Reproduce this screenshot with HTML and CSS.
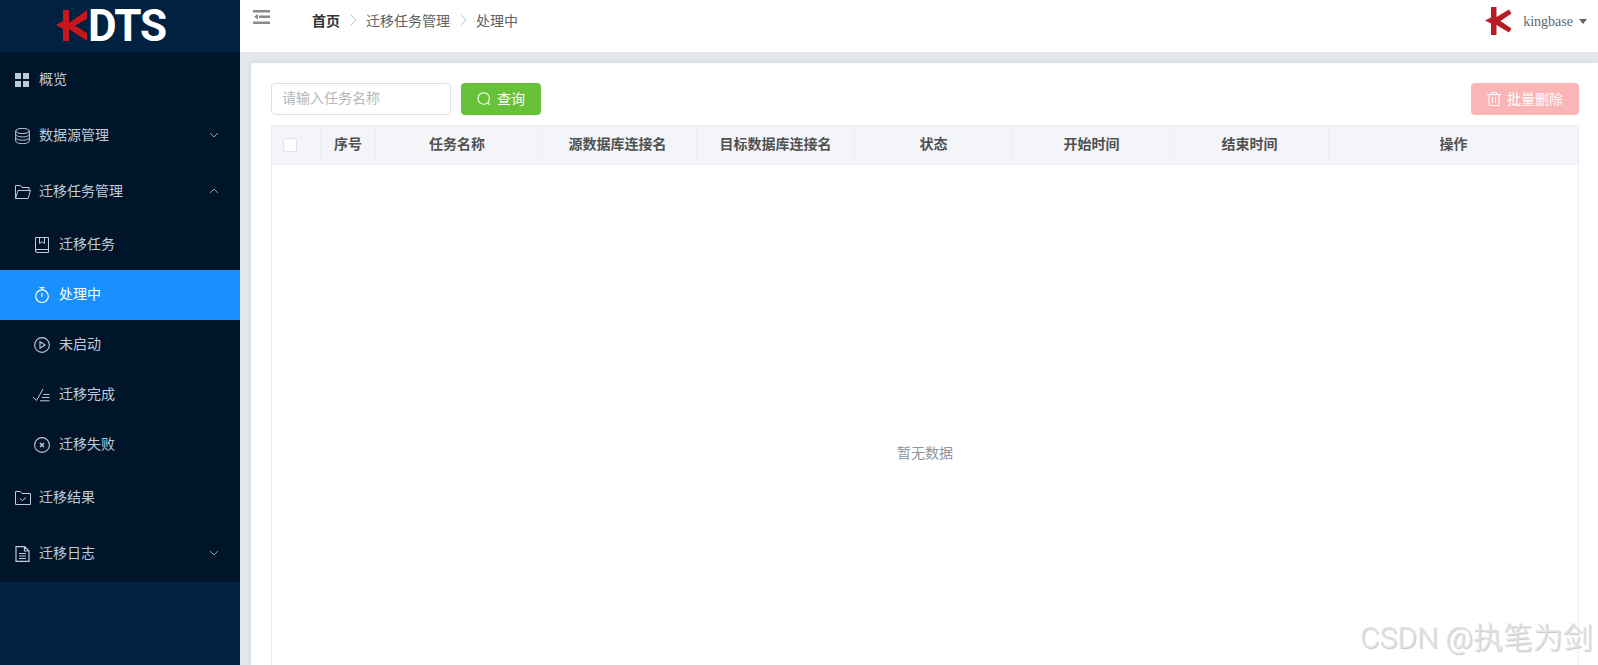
FILE: index.html
```html
<!DOCTYPE html>
<html lang="zh-CN">
<head>
<meta charset="utf-8">
<title>KDTS</title>
<link rel="stylesheet" href="styles.css">
</head>
<body>
<div class="app">
  <aside class="sidebar">
    <div class="logo">
      <svg class="logo-k" width="32" height="34" viewBox="0 0 32 34"><path fill="#c8161e" d="M7 1h6v13L31 1v9l-12 6.500L31 24v8L13 20v12H7V20L0 16l7-4z"/></svg>
      <span class="logo-text">DTS</span>
    </div>
    <nav class="menu">
      <a class="item"><svg class="ic" viewBox="0 0 16 16"><path fill="currentColor" d="M0 1h6v6H0zM8 1h6v6H8zM0 9h6v6H0zM8 9h6v6H8z"/></svg><span>概览</span></a>
      <a class="item"><svg class="ic" viewBox="0 0 16 16" fill="none" stroke="currentColor"><ellipse cx="7.500" cy="3" rx="6.800" ry="2.600"/><path d="M.7 3v10c0 1.500 3 2.600 6.800 2.600s6.800-1.100 6.800-2.600V3M.7 6.300c0 1.500 3 2.600 6.800 2.600s6.800-1.100 6.800-2.600M.7 9.600c0 1.500 3 2.600 6.800 2.600s6.800-1.100 6.800-2.600"/></svg><span>数据源管理</span><svg class="chev" viewBox="0 0 10 6"><path d="M1 1l4 4 4-4"/></svg></a>
      <a class="item"><svg class="ic" viewBox="0 0 16 16" fill="none" stroke="currentColor"><path d="M.5 14.500V1.500h5l1.500 2h7v3M.5 14.500h12.500l2.500-8H3z"/></svg><span>迁移任务管理</span><svg class="chev" viewBox="0 0 10 6"><path d="M1 5l4-4 4 4"/></svg></a>
      <a class="sub"><svg class="ic" viewBox="0 0 16 16" fill="none" stroke="currentColor"><path d="M1.500 13.500V.5h13v15H3a1.500 1.500 0 0 1-1.500-1.500 1.500 1.500 0 0 1 1.500-1.500h11.500M5.500.5v6l2.500-1.800 2.500 1.800v-6"/></svg><span>迁移任务</span></a>
      <a class="sub active"><svg class="ic" viewBox="0 0 16 16" fill="none" stroke="currentColor" stroke-width="1.200"><circle cx="8" cy="9.200" r="6.300"/><path d="M5.500.6h5M8 .6v2.400M8 6v3.800"/></svg><span>处理中</span></a>
      <a class="sub"><svg class="ic" viewBox="0 0 16 16" fill="none" stroke="currentColor" stroke-width="1.100"><circle cx="8" cy="8" r="7.400"/><path d="M6 4.800l5 3.200-5 3.200z"/></svg><span>未启动</span></a>
      <a class="sub"><svg class="ic wide" viewBox="0 0 17 14" fill="none" stroke="currentColor"><path d="M0 9l3.500 3.500L10 1M10.500 6.500h6M9 9.500h7.500M7 12.800h9.500"/></svg><span>迁移完成</span></a>
      <a class="sub"><svg class="ic" viewBox="0 0 16 16" fill="none" stroke="currentColor" stroke-width="1.100"><circle cx="8" cy="8" r="7.400"/><path stroke-width="1.500" d="M6 6l4 4M10 6l-4 4"/></svg><span>迁移失败</span></a>
      <a class="item"><svg class="ic" viewBox="0 0 16 16" fill="none" stroke="currentColor"><path d="M.5 14.500V1.500h5l1.500 2h8.500v11zM5 8.500l2.500 2 3.500-3"/></svg><span>迁移结果</span></a>
      <a class="item"><svg class="ic" viewBox="0 0 16 16" fill="none" stroke="currentColor" stroke-width="1.200"><path d="M1 .6h8.500L14 5v10.400H1zM9.500.6V5H14M4 7.500h7M4 10h7M4 12.500h7"/></svg><span>迁移日志</span><svg class="chev" viewBox="0 0 10 6"><path d="M1 1l4 4 4-4"/></svg></a>
    </nav>
  </aside>
  <div class="main">
    <header class="topbar">
      <svg class="fold" viewBox="0 0 17 14"><path fill="#8a8a8a" d="M0 0h17v2.500H0zM6 5.500h11V8H6zM0 11.500h17V14H0zM1 6.700l4-2.700v5.500z"/></svg>
      <div class="crumbs">
        <b>首页</b><svg class="sep" viewBox="0 0 8 12"><path d="M1 1l5 5-5 5"/></svg><span>迁移任务管理</span><svg class="sep" viewBox="0 0 8 12"><path d="M1 1l5 5-5 5"/></svg><span>处理中</span>
      </div>
      <div class="user">
        <svg class="user-logo" width="27" height="28" viewBox="0 0 27 28"><path fill="#b81c24" d="M6 0h5.500v10L24 2.500l2.500 4-11 7.500 11 7.500-2.500 4-12.500-7.500V28H6V16.500L0 13.500 6 10.500z"/></svg>
        <span class="uname">kingbase</span><i class="caret"></i>
      </div>
    </header>
    <section class="content">
      <div class="card">
        <div class="toolbar">
          <input class="search" type="text" placeholder="请输入任务名称">
          <button class="btn green"><svg class="bi" viewBox="0 0 14 14" fill="none" stroke="currentColor" stroke-width="1.100"><circle cx="6.700" cy="6.500" r="5.700"/><path d="M10.800 10.600l2.200 2.400"/></svg><span>查询</span></button>
          <button class="btn danger"><svg class="bi" viewBox="0 0 14 14" fill="none" stroke="currentColor"><path d="M0 2.500h14M2 2.500v11h10v-11M4.500 2.500V.5h5v2M5.500 5v6M8.500 5v6"/></svg><span>批量删除</span></button>
        </div>
        <div class="table">
          <div class="thead">
            <div class="th th-check"><i class="check"></i></div>
            <div class="th">序号</div>
            <div class="th">任务名称</div>
            <div class="th">源数据库连接名</div>
            <div class="th">目标数据库连接名</div>
            <div class="th">状态</div>
            <div class="th">开始时间</div>
            <div class="th">结束时间</div>
            <div class="th">操作</div>
          </div>
          <div class="tbody">暂无数据</div>
        </div>
      </div>
    </section>
  </div>
</div>
<div class="watermark">CSDN @执笔为剑</div>
</body>
</html>
```
FILE: styles.css
```css
* { box-sizing: border-box; }
html, body { margin: 0; height: 100%; overflow: hidden; }
body {
  font-family: "Liberation Sans", "Noto Sans CJK SC", sans-serif;
  font-size: 14px;
  color: #606266;
}
.app { display: flex; height: 665px; overflow: hidden; }

.sidebar { width: 240px; flex: none; background: #002140; }
.logo { height: 52px; display: flex; align-items: center; padding-left: 56px; }
.logo-k { flex: none; }
.logo-text {
  font-family: "Roboto", sans-serif;
  font-weight: 700;
  font-size: 44px;
  line-height: 52px;
  color: #fff;
  letter-spacing: -1px;
}
.menu { background: #001529; display: flex; flex-direction: column; }
.item, .sub {
  display: flex;
  align-items: center;
  color: #bfcbd9;
  font-size: 14px;
}
.item span, .sub span { margin-bottom: 4px; }
.item { height: 56px; padding-left: 15px; }
.sub { height: 50px; padding-left: 34px; }
.sub.active { background: #1890ff; color: #fff; }
.ic { width: 16px; height: 16px; flex: none; margin-right: 8px; }
.sub .ic { margin-right: 9px; }
.sub .ic.wide { width: 17px; height: 14px; margin-left: -1px; }
.chev {
  width: 10px;
  height: 6px;
  margin-left: auto;
  margin-right: 21px;
  margin-bottom: 2px;
  fill: none;
  stroke: #909db0;
}

.main { flex: 1; min-width: 0; display: flex; flex-direction: column; background: #e4e7ec; }
.topbar { height: 52px; flex: none; background: #fff; display: flex; align-items: flex-start; }
.fold { width: 17px; height: 14px; margin: 10px 0 0 13px; flex: none; }
.crumbs { display: flex; align-items: center; height: 20px; margin: 10px 0 0 42px; color: #606266; }
.crumbs b { color: #303133; font-weight: 700; }
.sep { width: 8px; height: 12px; margin: 0 8px 0 10px; fill: none; stroke: #c0c4cc; }
.user { margin-left: auto; display: flex; align-items: center; padding: 7px 11px 0 0; }
.uname { font-family: "Liberation Serif", serif; font-size: 14px; color: #606770; margin: 2px 0 0 11px; }
.caret {
  width: 0; height: 0;
  margin-left: 6px;
  border: 4px solid transparent;
  border-top: 5px solid #606266;
  border-bottom: 0;
}

.content { flex: 1; min-height: 0; padding: 11px 0 0 11px; }
.card {
  height: 100%;
  background: #fff;
  border-radius: 4px 0 0 0;
  padding: 20px 19px 0 20px;
  overflow: hidden;
  box-shadow: 0 0 6px rgba(0, 0, 0, .08);
}
.toolbar { display: flex; align-items: center; gap: 10px; height: 32px; margin-bottom: 10px; }
.search {
  width: 180px;
  height: 32px;
  border: 1px solid #dcdfe6;
  border-radius: 4px;
  padding: 0 10px 2px;
  font: inherit;
  outline: none;
}
.search::placeholder { color: #b4b7bd; opacity: 1; }
.btn {
  height: 32px;
  border: 0;
  border-radius: 4px;
  color: #fff;
  font: inherit;
  display: flex;
  align-items: center;
  justify-content: center;
  padding: 0;
}
.btn span { margin-bottom: 2px; }
.bi { width: 14px; height: 14px; margin-right: 6px; flex: none; }
.green { width: 80px; background: #67c23a; }
.danger { width: 108px; margin-left: auto; background: #fab6b6; }

.table { border-left: 1px solid #ebeef5; border-right: 1px solid #ebeef5; }
.thead {
  display: grid;
  grid-template-columns: 49px 55px 163px 158px 158px 158px 158px 158px 1fr;
  height: 40px;
  margin: 0 -1px;
  background: #f3f5f9;
  border: 1px solid #ebeef5;
}
.th {
  display: flex;
  align-items: center;
  justify-content: center;
  padding-bottom: 4px;
  font-weight: 700;
  color: #515151;
  border-right: 1px solid #ebeef5;
}
.th:last-child { border-right: 0; }
.th-check { padding: 0 12px 0 0; }
.check {
  width: 14px;
  height: 14px;
  border: 1px solid #dcdfe6;
  border-radius: 2px;
  background: #fff;
  opacity: .8;
}
.tbody {
  height: 574px;
  display: flex;
  align-items: center;
  justify-content: center;
  color: #909399;
}
.watermark {
  position: absolute;
  left: 1360px;
  top: 619px;
  font-family: "Roboto", "Noto Sans CJK SC", sans-serif;
  font-weight: 300;
  font-size: 30px;
  line-height: 38px;
  white-space: nowrap;
  color: #e2e2e2;
  text-shadow: 1px 1px 1px #c4c4c4;
}
```
